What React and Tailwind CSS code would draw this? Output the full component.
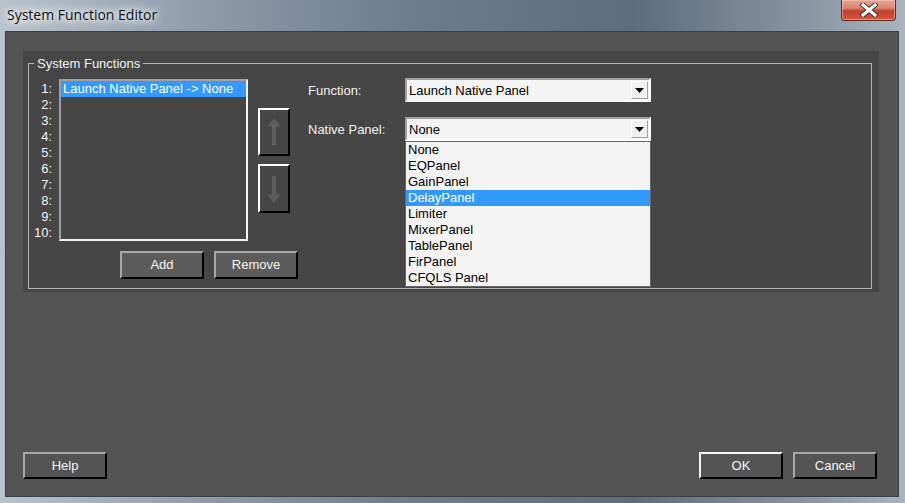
import React from "react";

const ui = { fontFamily: '"Liberation Sans", Arial, sans-serif' };

function WinButton({ children, def = false, className = "" }) {
  return (
    <div
      className={
        "flex items-center justify-center w-[84px] text-[13px] text-[#f4f4f4] border-2 " +
        (def
          ? "border-t-[#f4f4f4] border-l-[#f4f4f4] border-r-[#000000] border-b-[#000000] bg-[#545454] "
          : "border-t-[#a8a8a8] border-l-[#a8a8a8] border-r-[#000000] border-b-[#000000] bg-[#5c5c5c] ") +
        className
      }
    >
      {children}
    </div>
  );
}

function ArrowBtn({ up, className = "" }) {
  return (
    <div
      className={
        "w-[32px] flex items-center justify-center border-2 border-t-[#ffffff] border-l-[#ffffff] border-r-[#000000] border-b-[#000000] bg-[#464646] " +
        className
      }
    >
      <svg width="16" height="30" viewBox="0 0 16 30">
        {up ? (
          <path d="M8 1 L14.5 9.5 L10 9.5 L10 28 L6 28 L6 9.5 L1.5 9.5 Z" fill="#5e5e5e" />
        ) : (
          <path d="M8 29 L14.5 20.5 L10 20.5 L10 2 L6 2 L6 20.5 L1.5 20.5 Z" fill="#5e5e5e" />
        )}
      </svg>
    </div>
  );
}

function Combo({ value }) {
  return (
    <div className="relative w-[246px] h-[24px] border-2 border-t-[#a0a0a0] border-l-[#a0a0a0] border-r-[#ffffff] border-b-[#ffffff] bg-[#f4f4f4] flex items-center">
      <div className="flex-1 pl-[2px] pt-[1px] text-[13px] text-[#000000] leading-[16px]">{value}</div>
      <div className="w-[17px] h-[18px] mr-[1px] flex items-center justify-center bg-[#f0f0f0] border border-t-[#ffffff] border-l-[#ffffff] border-r-[#a0a0a0] border-b-[#a0a0a0]">
        <svg width="9" height="5" viewBox="0 0 9 5">
          <path d="M0 0 L9 0 L4.5 5 Z" fill="#000" />
        </svg>
      </div>
    </div>
  );
}

export default function App() {
  const nums = ["1:", "2:", "3:", "4:", "5:", "6:", "7:", "8:", "9:", "10:"];
  const panels = [
    "None",
    "EQPanel",
    "GainPanel",
    "DelayPanel",
    "Limiter",
    "MixerPanel",
    "TablePanel",
    "FirPanel",
    "CFQLS Panel",
  ];
  return (
    <div
      className="w-[905px] h-[503px] flex flex-col overflow-hidden bg-[linear-gradient(90deg,#b9c3cc_0%,#8e9cab_22%,#6d7d8e_45%,#5d6d7e_70%,#8a97a4_90%,#aab4be_100%)]"
      style={ui}
    >
      {/* title bar */}
      <div className="h-[31px] flex items-start shrink-0">
        <div
          className="ml-[7px] mt-[5px] text-[14px] leading-[20px] text-[#111111] [text-shadow:0_0_6px_#ffffff,0_0_10px_#ffffff,0_0_14px_#eef2f6]"
          style={{ fontFamily: '"Open Sans", "Noto Sans", sans-serif' }}
        >
          System Function Editor
        </div>
        <div className="flex-1" />
        <div className="mr-[9px] w-[55px] h-[21px] rounded-b-[4px] border border-t-0 border-[#5b2b22] bg-[linear-gradient(180deg,#e6a596_0%,#d98470_40%,#c0412a_55%,#d8553a_100%)] flex items-center justify-center shadow-[inset_0_0_0_1px_rgba(255,210,200,0.5)]">
          <svg width="18" height="14" viewBox="0 0 18 14">
            <path d="M3 2 L15 12 M15 2 L3 12" stroke="#3b3b3b" strokeWidth="5" strokeLinecap="square" />
            <path d="M3 2 L15 12 M15 2 L3 12" stroke="#ffffff" strokeWidth="3" strokeLinecap="square" />
          </svg>
        </div>
      </div>

      {/* client area */}
      <div className="flex-1 ml-[5px] mr-[6px] mb-[6px] border border-[#3a3f45] bg-[#545454] flex flex-col pl-[17px] pr-[19px] pt-[19px] pb-[17px]">
        {/* inner panel */}
        <div className="h-[241px] bg-[#464646] pt-[5px] pl-[5px] pr-[7px]">
          <fieldset className="h-[233px] border border-[#b4b4b4] pl-0 pr-0">
            <legend className="ml-[5px] px-[3px] text-[13px] leading-[15px] text-[#f2f2f2]">
              System Functions
            </legend>
            <div className="flex pt-[8px]">
              {/* left column */}
              <div className="flex flex-col">
                <div className="flex">
                  <div className="w-[23px] pt-[2px] flex flex-col items-end text-[13px] leading-[16px] text-[#f2f2f2]">
                    {nums.map((n) => (
                      <div key={n} className="h-[16px]">
                        {n}
                      </div>
                    ))}
                  </div>
                  <div className="ml-[7px] w-[189px] h-[162px] border-2 border-t-[#a0a0a0] border-l-[#a0a0a0] border-r-[#f4f4f4] border-b-[#f4f4f4] bg-[#464646]">
                    <div className="h-[16px] bg-[#3399ff] text-[13px] leading-[16px] text-[#ffffff] pl-[2px]">
                      Launch Native Panel -&gt; None
                    </div>
                  </div>
                  <div className="ml-[10px] pt-[29px] flex flex-col gap-[8px]">
                    <ArrowBtn up className="h-[48px]" />
                    <ArrowBtn className="h-[49px]" />
                  </div>
                </div>
                <div className="flex gap-[10px] mt-[10px] ml-[91px]">
                  <WinButton className="h-[28px]">Add</WinButton>
                  <WinButton className="h-[28px]">Remove</WinButton>
                </div>
              </div>

              {/* right column */}
              <div className="ml-[10px] -mt-[1px] flex flex-col">
                <div className="flex items-center h-[24px]">
                  <div className="w-[97px] pt-[2px] text-[13px] text-[#f2f2f2]">Function:</div>
                  <Combo value="Launch Native Panel" />
                </div>
                <div className="flex items-center h-[24px] mt-[15px]">
                  <div className="w-[97px] pt-[2px] text-[13px] text-[#f2f2f2]">Native Panel:</div>
                  <div className="relative">
                    <Combo value="None" />
                    <div className="absolute left-0 top-[24px] w-[246px] border border-[#646464] bg-[#f4f4f4] z-10">
                      {panels.map((p) => (
                        <div
                          key={p}
                          className={
                            "h-[16px] leading-[16px] text-[13px] pl-[2px] " +
                            (p === "DelayPanel" ? "bg-[#3399ff] text-[#ffffff]" : "text-[#000000]")
                          }
                        >
                          {p}
                        </div>
                      ))}
                    </div>
                  </div>
                </div>
              </div>
            </div>
          </fieldset>
        </div>

        <div className="flex-1" />

        {/* bottom buttons */}
        <div className="flex items-end mr-[2px]">
          <WinButton className="h-[27px] bg-[#545454]">Help</WinButton>
          <div className="flex-1" />
          <WinButton def className="h-[27px]">OK</WinButton>
          <WinButton className="h-[27px] ml-[10px] bg-[#545454]">Cancel</WinButton>
        </div>
      </div>
    </div>
  );
}
